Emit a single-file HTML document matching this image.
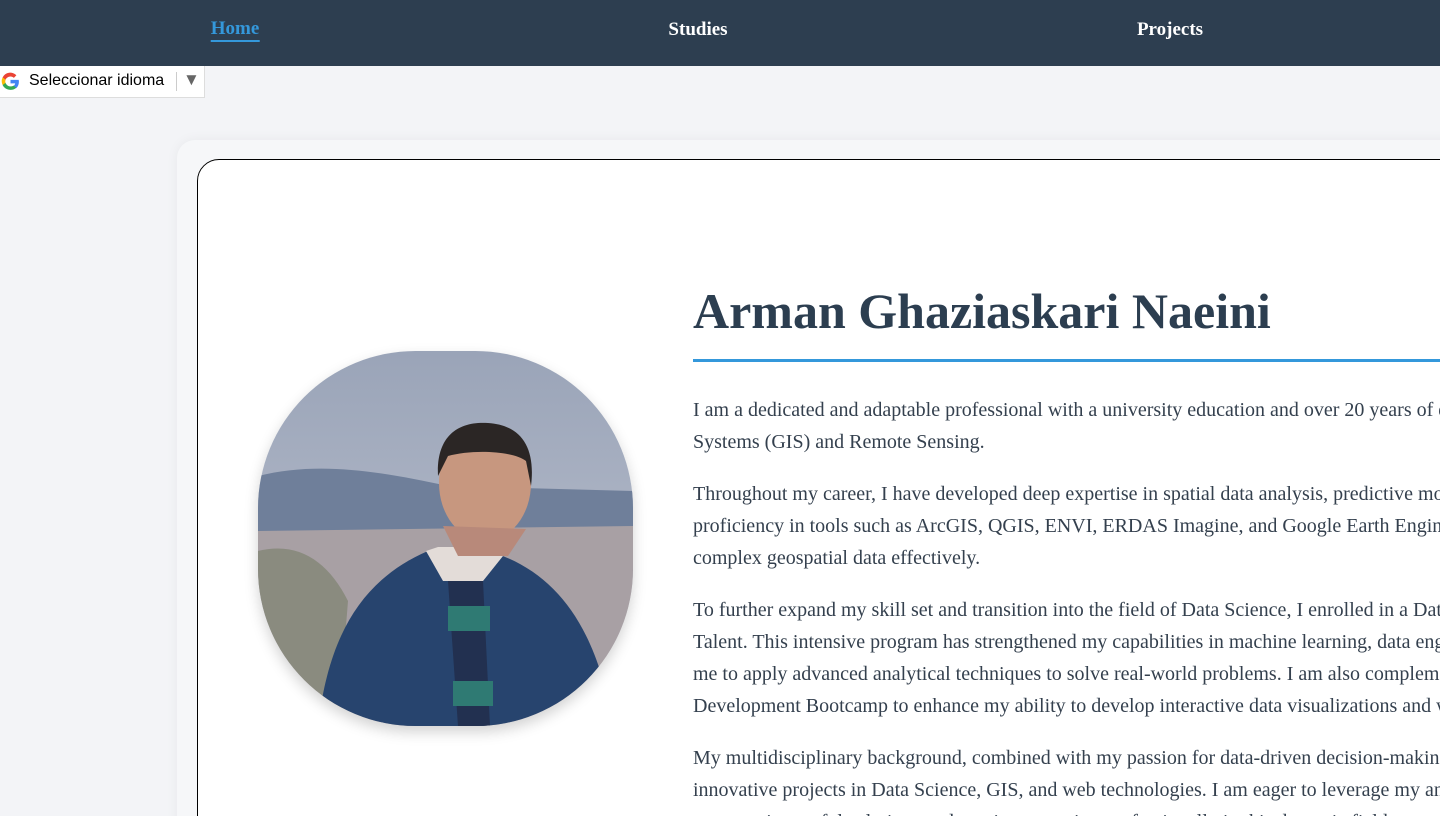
<!DOCTYPE html>
<html><head><meta charset="utf-8"><style>
html,body{margin:0;padding:0;width:1440px;height:816px;overflow:hidden;background:#f3f4f7;font-family:"Liberation Serif",serif;}
#wrap{position:relative;width:1440px;height:816px;overflow:hidden;}
nav{position:absolute;left:0;top:0;width:1440px;height:66px;background:#2d3e50;}
nav a{position:absolute;top:18px;font-weight:bold;font-size:19px;color:#fff;text-decoration:none;transform:translateX(-50%);line-height:24px;}
nav a.home{color:#3498db;border-bottom:2px solid #3498db;line-height:22px;}
.gt{position:absolute;left:0;top:66px;width:205px;height:32px;background:#fff;border:1px solid #ddd;border-left:none;border-top:none;box-sizing:border-box;font-family:"Liberation Sans",sans-serif;font-size:16px;color:#000;}
.gt .t{position:absolute;left:29px;top:6px;}
.gt .sep{position:absolute;left:176px;top:6px;width:1px;height:19px;background:#ccc;}
.gt .arr{position:absolute;left:183px;top:4px;color:#666;font-size:17px;}
.outer{position:absolute;left:177px;top:140px;width:1400px;height:800px;background:#f6f7f9;border-radius:18px;box-shadow:0 0 12px rgba(0,0,0,0.05);}
.card{position:absolute;left:197px;top:159px;width:1400px;height:800px;background:#fff;border:1px solid #000;border-radius:22px;box-sizing:border-box;}
.photo{position:absolute;left:258px;top:351px;width:375px;height:375px;border-radius:42%;overflow:hidden;box-shadow:0 6px 14px rgba(0,0,0,0.18);}
h1{position:absolute;left:693px;top:282px;margin:0;font-size:50px;font-weight:bold;color:#2c3e50;line-height:58px;white-space:nowrap;}
.rule{position:absolute;left:693px;top:359px;width:800px;height:3px;background:#3498db;}
.txt{position:absolute;left:693px;top:394px;font-size:20px;line-height:32px;color:#34404e;white-space:nowrap;}
.txt p{margin:0 0 20px 0;}
</style></head><body><div id="wrap">
<nav><a class="home" style="left:235px">Home</a><a style="left:698px">Studies</a><a style="left:1170px">Projects</a></nav>
<div class="gt">
<svg style="position:absolute;left:0;top:5px" width="21" height="21" viewBox="0 0 20 20"><path d="M18 10.2c0-.6-.1-1.2-.2-1.7H10v3.3h4.5a3.9 3.9 0 0 1-1.7 2.5v2h2.7c1.6-1.5 2.5-3.6 2.5-6.1z" fill="#4285f4"/><path d="M10 18c2.3 0 4.1-.8 5.5-2.1l-2.7-2c-.7.5-1.7.8-2.8.8-2.2 0-4-1.5-4.7-3.4H2.5v2.1A8 8 0 0 0 10 18z" fill="#34a853"/><path d="M5.3 11.3a4.8 4.8 0 0 1 0-3.1V6.1H2.5a8 8 0 0 0 0 7.2z" fill="#fbbc05"/><path d="M10 5.2c1.2 0 2.3.4 3.2 1.3l2.4-2.4A8 8 0 0 0 2.5 6.1l2.8 2.1C6 6.7 7.8 5.2 10 5.2z" fill="#ea4335"/></svg>
<span class="t">Seleccionar idioma</span><span class="sep"></span><span class="arr">▼</span></div>
<div class="outer"></div>
<div class="card"></div>
<div class="photo"><svg width="375" height="375" viewBox="0 0 375 375">
<defs><linearGradient id="sky" x1="0" y1="0" x2="0" y2="1"><stop offset="0" stop-color="#9aa4b8"/><stop offset="0.4" stop-color="#a9b1c2"/><stop offset="1" stop-color="#b8b0b5"/></linearGradient></defs>
<rect width="375" height="375" fill="url(#sky)"/>
<path d="M0 125 C60 110 120 120 190 135 L375 140 L375 220 L0 220z" fill="#6f7f9a"/>
<path d="M0 180 L375 175 L375 375 L0 375z" fill="#a8a0a4"/>
<path d="M0 200 C40 190 70 210 90 250 L80 375 L0 375z" fill="#7d816f" opacity="0.7"/>
<path d="M60 375 C70 290 100 230 170 200 L230 200 C300 220 340 280 355 375z" fill="#27446e"/>
<path d="M168 200 L185 230 L225 230 L245 205 L232 196 L180 196z" fill="#e3dcd8"/>
<path d="M190 230 L225 230 L232 375 L200 375z" fill="#223050"/>
<rect x="190" y="255" width="42" height="25" fill="#2f7a73"/>
<rect x="195" y="330" width="40" height="25" fill="#2f7a73"/>
<ellipse cx="227" cy="132" rx="46" ry="58" fill="#c7977f"/>
<path d="M180 125 C178 85 200 70 230 72 C262 74 278 95 273 135 L268 110 C255 100 215 98 190 105z" fill="#2b2625"/>
<path d="M185 175 L200 205 L250 205 L268 178z" fill="#b8897a"/>
</svg></div>
<h1>Arman Ghaziaskari Naeini</h1>
<div class="rule"></div>
<div class="txt">
<p>I am a dedicated and adaptable professional with a university education and over 20 years of experience in Geographic Information<br>Systems (GIS) and Remote Sensing.</p>
<p>Throughout my career, I have developed deep expertise in spatial data analysis, predictive modeling, and mapping, with strong<br>proficiency in tools such as ArcGIS, QGIS, ENVI, ERDAS Imagine, and Google Earth Engine, allowing me to analyze and interpret<br>complex geospatial data effectively.</p>
<p>To further expand my skill set and transition into the field of Data Science, I enrolled in a Data Science Bootcamp at Barcelona Digital<br>Talent. This intensive program has strengthened my capabilities in machine learning, data engineering, and data visualization, enabling<br>me to apply advanced analytical techniques to solve real-world problems. I am also complementing this training with a Full Stack Web<br>Development Bootcamp to enhance my ability to develop interactive data visualizations and web applications.</p>
<p>My multidisciplinary background, combined with my passion for data-driven decision-making, allows me to contribute effectively to<br>innovative projects in Data Science, GIS, and web technologies. I am eager to leverage my analytical skills and technical expertise<br>to create impactful solutions and continue growing professionally in this dynamic field.</p>
</div>
</div></body></html>
